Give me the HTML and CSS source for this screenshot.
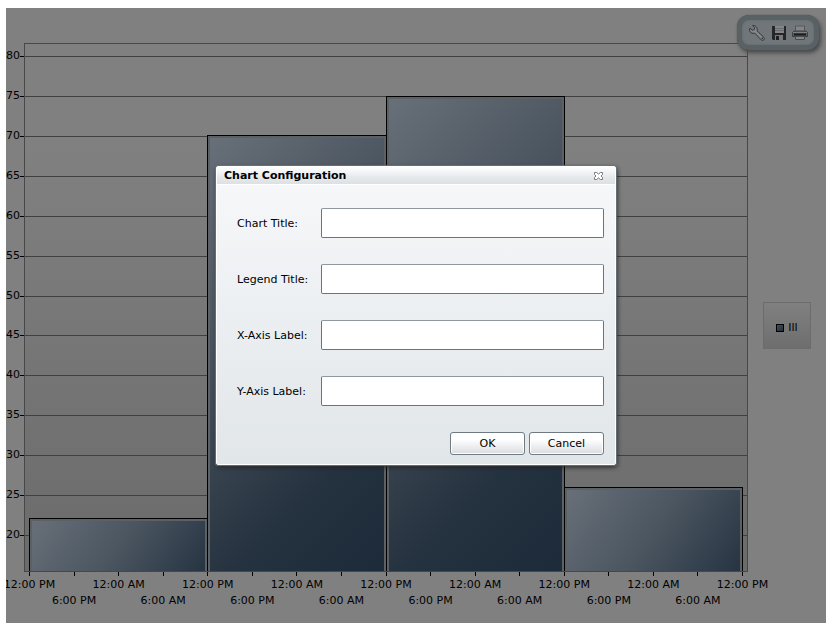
FILE: index.html
```html
<!DOCTYPE html>
<html lang="en">
<head>
<meta charset="utf-8">
<title>Chart Configuration</title>
<link rel="stylesheet" href="styles.css">
</head>
<body>
<main class="app">
  <div class="chart">
    <div class="y-axis">
      <div class="y-step"><span>80</span></div>
      <div class="y-step"><span>75</span></div>
      <div class="y-step"><span>70</span></div>
      <div class="y-step"><span>65</span></div>
      <div class="y-step"><span>60</span></div>
      <div class="y-step"><span>55</span></div>
      <div class="y-step"><span>50</span></div>
      <div class="y-step"><span>45</span></div>
      <div class="y-step"><span>40</span></div>
      <div class="y-step"><span>35</span></div>
      <div class="y-step"><span>30</span></div>
      <div class="y-step"><span>25</span></div>
      <div class="y-step y-step-last"><span>20</span></div>
    </div>
    <div class="plot">
      <div class="gridlines">
        <i></i><i></i><i></i><i></i><i></i><i></i><i></i><i></i><i></i><i></i><i></i><i></i><i class="last"></i>
      </div>
      <div class="bars">
        <div class="bar short" style="height:10.1%"></div>
        <div class="bar" style="height:82.7%"></div>
        <div class="bar" style="height:90.1%"></div>
        <div class="bar short" style="height:16%"></div>
      </div>
    </div>
    <div class="x-axis">
      <div class="tick"><span>12:00 PM</span></div>
      <div class="tick low"><span>6:00 PM</span></div>
      <div class="tick"><span>12:00 AM</span></div>
      <div class="tick low"><span>6:00 AM</span></div>
      <div class="tick"><span>12:00 PM</span></div>
      <div class="tick low"><span>6:00 PM</span></div>
      <div class="tick"><span>12:00 AM</span></div>
      <div class="tick low"><span>6:00 AM</span></div>
      <div class="tick"><span>12:00 PM</span></div>
      <div class="tick low"><span>6:00 PM</span></div>
      <div class="tick"><span>12:00 AM</span></div>
      <div class="tick low"><span>6:00 AM</span></div>
      <div class="tick"><span>12:00 PM</span></div>
      <div class="tick low"><span>6:00 PM</span></div>
      <div class="tick"><span>12:00 AM</span></div>
      <div class="tick low"><span>6:00 AM</span></div>
      <div class="tick"><span>12:00 PM</span></div>
    </div>
    <aside class="legend-area">
      <div class="legend"><i class="swatch"></i><span>Ill</span></div>
    </aside>
  </div>

  <div class="toolbar">
    <button type="button" aria-label="Configure">
      <svg width="18" height="18" viewBox="0 0 18 18"><path d="M4.6 1.5 6.8 3.6 6.2 5.6 4.2 6.2 1.9 4.2C.8 6.6 2.2 9.2 5 9.3c.7 0 1.200-.1 1.700-.2l6.600 6.800c1.800 1.500 4-.6 2.600-2.500L9.100 6.900C9.800 3.800 7.600 1 4.600 1.500Z" fill="#868686" stroke="#34373a" stroke-width="1"/><circle cx="14.300" cy="14.400" r=".8" fill="#303336"/></svg>
    </button>
    <button type="button" aria-label="Save">
      <svg width="16" height="16" viewBox="0 0 16 16"><path d="M1 1h14v14H2l-1-1Z" fill="#24262a"/><path d="M4 1h9v7H4Z" fill="#858585"/><path d="M4 3.500h9M4 5.500h9" stroke="#66696c"/><path d="M4 10h8v5H4Z" fill="#77797b"/><path d="M5 11h3v4H5Z" fill="#1d1f22"/></svg>
    </button>
    <button type="button" aria-label="Print">
      <svg width="16" height="16" viewBox="0 0 16 16"><path d="M3.500 1h9v6h-9Z" fill="#858585" stroke="#55585b"/><path d="M.5 7.500 2 6h12l1.500 1.500v4H.5Z" fill="#5b5e61" stroke="#3c3f42"/><path d="M1 7.500h14" stroke="#7d7f81"/><path d="M2 9.500h12" stroke="#17191b" stroke-width="2"/><path d="M3.500 11.500h9v3h-9Z" fill="#868686" stroke="#4a4d50"/></svg>
    </button>
  </div>

  <div class="overlay">
    <form class="dialog" role="dialog" aria-labelledby="dialog-title">
      <header class="titlebar">
        <h1 id="dialog-title">Chart Configuration</h1>
        <button type="button" class="close" aria-label="Close">
          <svg width="11" height="10" viewBox="0 0 11 10"><path d="M1.500 1.500h2l2 1.500 2-1.500h2v2L8 5l1.500 1.500v2h-2l-2-1.500-2 1.500h-2v-2L3 5 1.500 3.500Z" fill="#fff" stroke="#77797b"/></svg>
        </button>
      </header>
      <div class="fields">
        <label for="chart-title">Chart Title:</label><input id="chart-title" type="text">
        <label for="legend-title">Legend Title:</label><input id="legend-title" type="text">
        <label for="x-label">X-Axis Label:</label><input id="x-label" type="text">
        <label for="y-label">Y-Axis Label:</label><input id="y-label" type="text">
      </div>
      <footer class="actions">
        <button type="button">OK</button>
        <button type="button">Cancel</button>
      </footer>
    </form>
  </div>
</main>
</body>
</html>
```
FILE: styles.css
```css
* { box-sizing: border-box; }

body {
  margin: 8px 9px 7px 6px;
  background: #fff;
  color: #000;
  font: 11px/14px "DejaVu Sans", Verdana, sans-serif;
}

button, input { font: inherit; color: inherit; }

.app {
  position: relative;
  height: calc(100vh - 15px);
  min-height: 400px;
  overflow: hidden;
  background: #808080;
}

.chart {
  display: grid;
  grid-template-columns: 18px 1fr 78px;
  grid-template-rows: 35px 1fr 51px;
  height: 100%;
}

/* Value axis */
.y-axis {
  grid-area: 2 / 1;
  display: flex;
  flex-direction: column;
  padding-top: 13px;
}

.y-step {
  flex: 1;
  display: flex;
  align-items: flex-start;
}

.y-step span { margin-top: -7px; }

.y-step::after {
  content: "";
  flex: 1;
  height: 1px;
  background: #000;
}

.y-step-last { flex: 0 0 37px; }

/* Plot area */
.plot {
  grid-area: 2 / 2;
  display: grid;
  border: 1px solid #484848;
  background: linear-gradient(#808080 20%, #6b6b6b);
}

.gridlines {
  grid-area: 1 / 1;
  display: flex;
  flex-direction: column;
  padding-top: 12px;
}

.gridlines i {
  flex: 1;
  border-top: 1px solid #404040;
}

.gridlines .last { flex: 0 0 36px; }

.bars {
  grid-area: 1 / 1;
  display: grid;
  grid-template-columns: repeat(4, 1fr);
  align-items: end;
  padding: 0 5px 0 4px;
}

.bar {
  margin-right: -1px;
  border: 1px solid #000;
  border-bottom: 0;
  background: linear-gradient(135deg, #687079, #4a545e 35%, #25323f 75%, #1c2a3a);
  box-shadow: inset 2px 2px #5c6166, inset -2px 0 #5c6166;
}

.bar.short { background: linear-gradient(125deg, #69707a, #4b5660 50%, #263342); }

/* Time axis */
.x-axis {
  grid-area: 3 / 2;
  display: flex;
  justify-content: space-between;
  padding: 0 5px;
}

.tick {
  display: flex;
  flex-direction: column;
  align-items: center;
  width: 1px;
  white-space: nowrap;
}

.tick::before {
  content: "";
  width: 1px;
  height: 4px;
  margin-bottom: 2px;
  background: #000;
}

.tick.low::before { margin-bottom: 18px; }

/* Legend */
.legend-area {
  grid-area: 1 / 3 / 4 / 4;
  display: grid;
  place-items: center;
  padding-top: 20px;
}

.legend {
  display: flex;
  align-items: center;
  justify-content: center;
  gap: 4px;
  width: 48px;
  height: 47px;
  padding-top: 4px;
  border: 1px solid #6c6c6c;
  background: linear-gradient(#808080, #6e6e6e);
}

.swatch {
  width: 8px;
  height: 8px;
  border: 1px solid #000;
  background: linear-gradient(135deg, #49525c, #1f2c3a);
}

/* Floating tools */
.toolbar {
  position: absolute;
  top: 7px;
  right: 7px;
  display: flex;
  align-items: center;
  gap: 5px;
  height: 35px;
  padding: 0 6px;
  border: 5px solid #596164;
  border-radius: 12px;
  background: #70767a;
  box-shadow: 2px 3px 4px #484848, inset 0 0 2px #5b6367, 0 0 1px #3c4447;
}

.toolbar button {
  display: flex;
  padding: 0;
  border: 0;
  background: none;
}

/* Dialog */
.overlay {
  position: absolute;
  inset: 0;
  display: grid;
  place-items: center;
}

.dialog {
  width: 400px;
  max-width: 100%;
  border: 1px solid #fff;
  border-radius: 2px;
  background: linear-gradient(#f7f8fa, #e1e6e9);
  box-shadow: 0 0 1px 1px #66757c, 1px 2px 5px #202020;
}

.titlebar {
  display: flex;
  align-items: center;
  justify-content: space-between;
  height: 18px;
  padding: 1px 11px 0 7px;
  border-bottom: 1px solid #fff;
  background: linear-gradient(#fff, #e6e9ec 60%, #dee1e4);
}

.titlebar h1 {
  margin: 0;
  font-size: 11px;
  line-height: 16px;
}

.close {
  display: flex;
  padding: 0;
  border: 0;
  background: none;
}

.fields {
  display: grid;
  grid-template-columns: 84px 1fr;
  align-items: center;
  row-gap: 26px;
  padding: 23px 11px 26px 20px;
}

.fields label { padding-top: 2px; }

.fields input {
  width: 100%;
  height: 30px;
  padding: 0 6px;
  border: 1px solid #68757f;
  border-top-color: #8f989f;
  border-radius: 2px;
  background: #fff;
}

.actions {
  display: flex;
  justify-content: flex-end;
  gap: 4px;
  padding: 0 11px 9px;
}

.actions button {
  width: 75px;
  height: 23px;
  padding: 1px 0 0;
  border: 1px solid #6f7a82;
  border-radius: 3px;
  background: linear-gradient(#fff 30%, #d9dce0);
  box-shadow: inset 0 0 0 1px #fff;
}
```
